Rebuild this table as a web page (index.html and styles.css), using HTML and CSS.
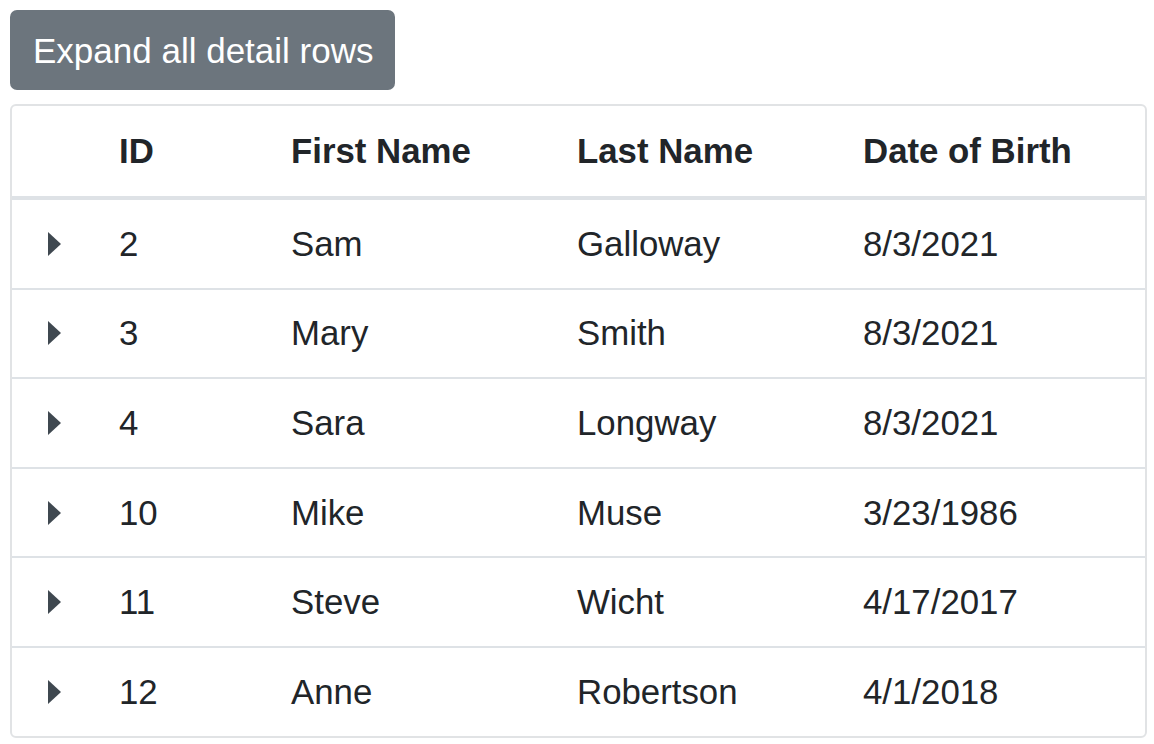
FILE: index.html
```html
<!DOCTYPE html>
<html>
<head>
<meta charset="utf-8">
<link rel="stylesheet" href="styles.css">
</head>
<body>
<button class="btn">Expand all detail rows</button>
<div class="table-wrap">
  <table class="grid">
    <colgroup>
      <col class="c-arrow"><col class="c-id"><col class="c-first"><col class="c-last"><col class="c-dob">
    </colgroup>
    <thead>
      <tr><th></th><th>ID</th><th>First Name</th><th>Last Name</th><th>Date of Birth</th></tr>
    </thead>
    <tbody>
      <tr><td class="arrow-cell"><span class="caret"></span></td><td>2</td><td>Sam</td><td>Galloway</td><td>8/3/2021</td></tr>
      <tr><td class="arrow-cell"><span class="caret"></span></td><td>3</td><td>Mary</td><td>Smith</td><td>8/3/2021</td></tr>
      <tr><td class="arrow-cell"><span class="caret"></span></td><td>4</td><td>Sara</td><td>Longway</td><td>8/3/2021</td></tr>
      <tr><td class="arrow-cell"><span class="caret"></span></td><td>10</td><td>Mike</td><td>Muse</td><td>3/23/1986</td></tr>
      <tr><td class="arrow-cell"><span class="caret"></span></td><td>11</td><td>Steve</td><td>Wicht</td><td>4/17/2017</td></tr>
      <tr><td class="arrow-cell"><span class="caret"></span></td><td>12</td><td>Anne</td><td>Robertson</td><td>4/1/2018</td></tr>
    </tbody>
  </table>
</div>
</body>
</html>
```
FILE: styles.css
```css
html, body {
  margin: 0;
  padding: 0;
  background: #ffffff;
}
body {
  padding: 10px 7px 0 10px;
  font-family: "Liberation Sans", Arial, Helvetica, sans-serif;
  color: #212529;
}
.btn {
  display: block;
  width: 385px;
  height: 80px;
  padding: 0 23px;
  margin: 0;
  border: none;
  border-radius: 7px;
  background: #6c757d;
  color: #ffffff;
  font-family: "Liberation Sans", Arial, Helvetica, sans-serif;
  font-size: 35px;
  line-height: 51px;
  text-align: left;
  white-space: nowrap;
}
.table-wrap {
  margin-top: 14px;
  width: 1137px;
  box-sizing: border-box;
  border: 2px solid #e1e3e5;
  border-radius: 6px;
  overflow: hidden;
}
.grid {
  width: 100%;
  border-collapse: collapse;
  table-layout: fixed;
  font-size: 34.8px;
}
.c-arrow { width: 83px; }
.c-id { width: 172px; }
.c-first { width: 286px; }
.c-last { width: 286px; }
.grid th {
  height: 90px;
  padding: 0 0 0 24px;
  text-align: left;
  font-weight: bold;
  vertical-align: middle;
  border-bottom: 4px solid #dee2e6;
  line-height: 40px;
}
.grid td {
  height: 87.6px;
  padding: 0 0 0 24px;
  vertical-align: middle;
  line-height: 40px;
  border-bottom: 2px solid #dee2e6;
  white-space: nowrap;
}
.grid tbody tr:last-child td {
  border-bottom: none;
}
.grid td.arrow-cell {
  padding-left: 36px;
}
.caret {
  display: block;
  width: 0;
  height: 0;
  border-left: 13px solid #3f4850;
  border-top: 12px solid transparent;
  border-bottom: 12px solid transparent;
}
```
